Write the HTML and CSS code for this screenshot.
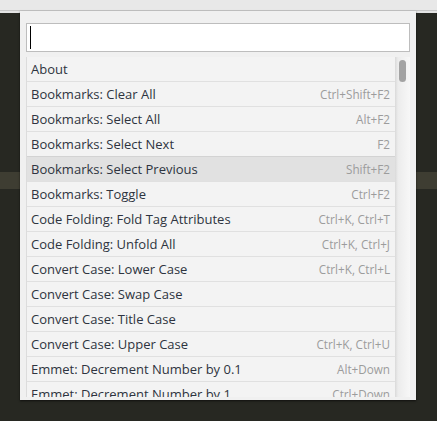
FILE: index.html
```html
<!DOCTYPE html>
<html>
<head>
<meta charset="utf-8">
<link rel="stylesheet" href="styles.css">
</head>
<body>
<div class="topbar"></div>
<div class="topstrip"></div>
<div class="editor">
  <div class="line-hl"></div>
</div>
<div class="palette">
  <div class="search"><span class="caret"></span></div>
  <div class="list">
    <div class="rows">
      <div class="row"><span class="name">About</span></div>
      <div class="row"><span class="name">Bookmarks: Clear All</span><span class="key">Ctrl+Shift+F2</span></div>
      <div class="row"><span class="name">Bookmarks: Select All</span><span class="key">Alt+F2</span></div>
      <div class="row"><span class="name">Bookmarks: Select Next</span><span class="key">F2</span></div>
      <div class="row sel"><span class="name">Bookmarks: Select Previous</span><span class="key">Shift+F2</span></div>
      <div class="row"><span class="name">Bookmarks: Toggle</span><span class="key">Ctrl+F2</span></div>
      <div class="row"><span class="name">Code Folding: Fold Tag Attributes</span><span class="key">Ctrl+K, Ctrl+T</span></div>
      <div class="row"><span class="name">Code Folding: Unfold All</span><span class="key">Ctrl+K, Ctrl+J</span></div>
      <div class="row"><span class="name">Convert Case: Lower Case</span><span class="key">Ctrl+K, Ctrl+L</span></div>
      <div class="row"><span class="name">Convert Case: Swap Case</span></div>
      <div class="row"><span class="name">Convert Case: Title Case</span></div>
      <div class="row"><span class="name">Convert Case: Upper Case</span><span class="key">Ctrl+K, Ctrl+U</span></div>
      <div class="row"><span class="name">Emmet: Decrement Number by 0.1</span><span class="key">Alt+Down</span></div>
      <div class="row"><span class="name">Emmet: Decrement Number by 1</span><span class="key">Ctrl+Down</span></div>
    </div>
    <div class="scrollbar"><div class="thumb"></div></div>
  </div>
</div>
</body>
</html>
```
FILE: styles.css
```css
html, body {
  margin: 0;
  padding: 0;
}
body {
  background: #272822;
  width: 437px;
  height: 421px;
  overflow: hidden;
  position: relative;
  font-family: "Open Sans", "Noto Sans", sans-serif;
}
.topbar {
  height: 10px;
  background: #e8e8e8;
  border-bottom: 1px solid #c6c6c6;
}
.topstrip {
  height: 2px;
  background: #e4e4e4;
}
.editor {
  padding-top: 159px;
}
.line-hl {
  height: 17px;
  background: #3e3d32;
}
.palette {
  position: absolute;
  left: 20px;
  top: 11px;
  width: 384px;
  padding: 12px 6px 3px 6px;
  background: #f0f0f0;
  box-shadow: 0 1px 2px rgba(0, 0, 0, 0.6);
}
.search {
  height: 27px;
  background: #fff;
  border: 1px solid #bdbdbd;
  display: flex;
  align-items: center;
  padding-left: 3px;
}
.caret {
  width: 1px;
  height: 23px;
  background: #000;
}
.list {
  margin-top: 5px;
  height: 340px;
  display: flex;
  border-left: 1px solid #dcdcdc;
  overflow: hidden;
}
.rows {
  flex: 1;
  background: #f3f3f3;
}
.row {
  height: 24px;
  border-bottom: 1px solid #e0e0e0;
  display: flex;
  align-items: center;
  justify-content: space-between;
  padding: 0 5px 0 4px;
  color: #2e3440;
}
.row.sel {
  background: #e1e1e1;
  border-top: 1px solid #d3d3d3;
  margin-top: -1px;
}
.name {
  font-size: 13px;
}
.key {
  font-size: 11.7px;
  color: #9c9c9c;
}
.scrollbar {
  width: 15px;
  background: linear-gradient(to right, #d9d9d9 0, #ececec 3px, #f7f7f7 100%);
  position: relative;
}
.thumb {
  position: absolute;
  left: 4px;
  top: 3px;
  width: 7px;
  height: 22px;
  border-radius: 4px;
  background: #a3a3a3;
}
```
